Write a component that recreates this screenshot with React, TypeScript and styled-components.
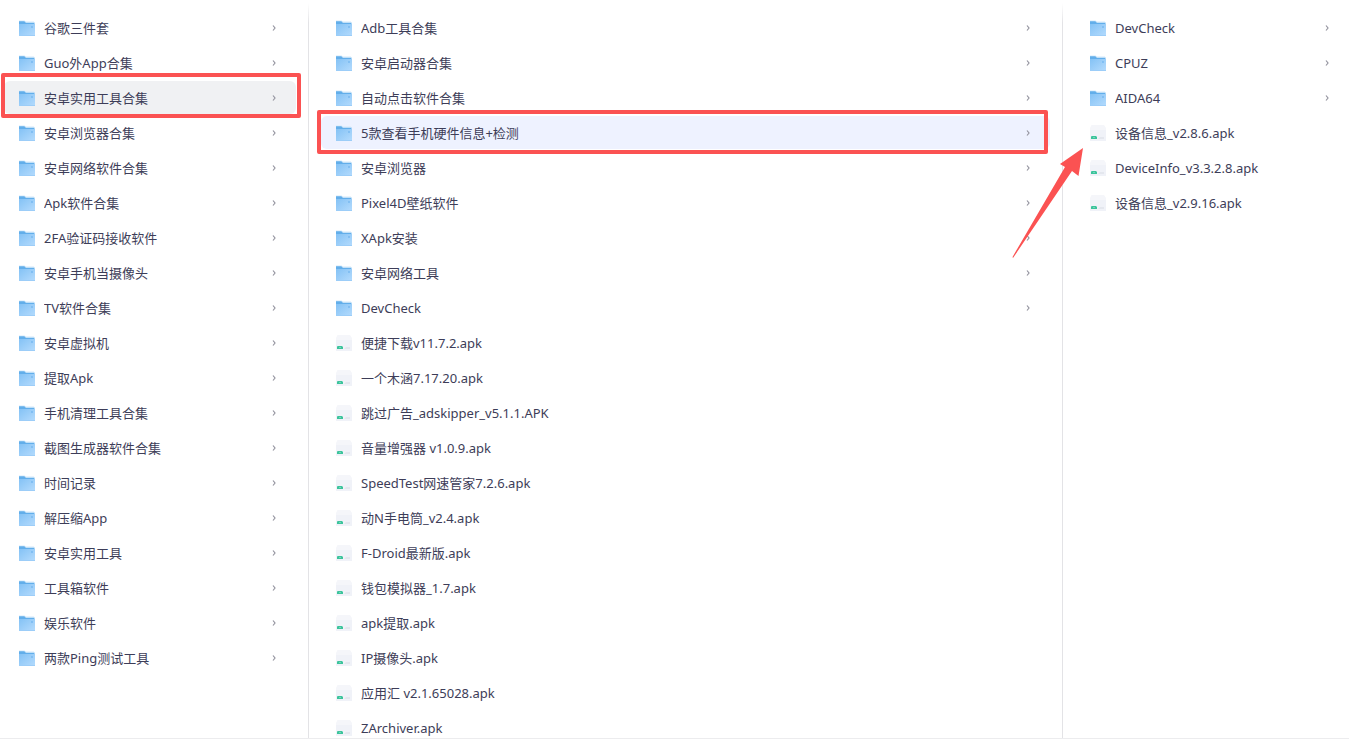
import React from "react";
import styled, { createGlobalStyle, css } from "styled-components";

const GlobalStyle = createGlobalStyle`
  * { box-sizing: border-box; }
  body { margin: 0; background: #fff; }
`;

type Kind = "folder" | "apk";
type Entry = { name: string; kind: Kind };

const folders = (...names: string[]): Entry[] => names.map((name) => ({ name, kind: "folder" }));
const apks = (...names: string[]): Entry[] => names.map((name) => ({ name, kind: "apk" }));

const rootEntries = folders(
  "谷歌三件套",
  "Guo外App合集",
  "安卓实用工具合集",
  "安卓浏览器合集",
  "安卓网络软件合集",
  "Apk软件合集",
  "2FA验证码接收软件",
  "安卓手机当摄像头",
  "TV软件合集",
  "安卓虚拟机",
  "提取Apk",
  "手机清理工具合集",
  "截图生成器软件合集",
  "时间记录",
  "解压缩App",
  "安卓实用工具",
  "工具箱软件",
  "娱乐软件",
  "两款Ping测试工具"
);

const toolEntries = [
  ...folders(
    "Adb工具合集",
    "安卓启动器合集",
    "自动点击软件合集",
    "5款查看手机硬件信息+检测",
    "安卓浏览器",
    "Pixel4D壁纸软件",
    "XApk安装",
    "安卓网络工具",
    "DevCheck"
  ),
  ...apks(
    "便捷下载v11.7.2.apk",
    "一个木涵7.17.20.apk",
    "跳过广告_adskipper_v5.1.1.APK",
    "音量增强器 v1.0.9.apk",
    "SpeedTest网速管家7.2.6.apk",
    "动N手电筒_v2.4.apk",
    "F-Droid最新版.apk",
    "钱包模拟器_1.7.apk",
    "apk提取.apk",
    "IP摄像头.apk",
    "应用汇 v2.1.65028.apk",
    "ZArchiver.apk"
  ),
];

const deviceEntries = [
  ...folders("DevCheck", "CPUZ", "AIDA64"),
  ...apks("设备信息_v2.8.6.apk", "DeviceInfo_v3.3.2.8.apk", "设备信息_v2.9.16.apk"),
];

const Page = styled.div`
  height: 100vh;
  padding-bottom: 1px;
  font-family: "Noto Sans", "Noto Sans CJK SC", sans-serif;
`;

const Browser = styled.main`
  display: grid;
  grid-template-columns: 309px minmax(0, 1fr) 286px;
  height: 100%;
  overflow: hidden;
  border-bottom: 1px solid #ececee;
`;

const Column = styled.section<{ $first?: boolean; $last?: boolean }>`
  position: relative;
  min-width: 0;
  padding: 11px ${(p) => (p.$last ? 0 : 12)}px 0 ${(p) => (p.$first ? 4 : 12)}px;
  ${(p) =>
    !p.$last &&
    css`
      border-right: 1px solid;
      border-image: linear-gradient(to bottom, #fff 4px, #e3e3e6 24px) 1;
    `}
`;

const List = styled.ul`
  display: flex;
  flex-direction: column;
  gap: 2px;
  margin: 0;
  padding: 0;
  list-style: none;
`;

const Item = styled.li`
  position: relative;
`;

const Row = styled.button<{ $tone?: Tone }>`
  display: flex;
  align-items: center;
  gap: 8px;
  width: 100%;
  height: 33px;
  padding: 0 19px 0 14px;
  border: 0;
  border-radius: 6px;
  background: ${(p) => (p.$tone === "grey" ? "#f0f1f3" : p.$tone === "blue" ? "#eef2ff" : "transparent")};
  color: #3d3d58;
  font: inherit;
  font-size: 13px;
  line-height: 20px;
  text-align: left;
  cursor: pointer;
`;

const Name = styled.span`
  flex: 1;
  min-width: 0;
  overflow: hidden;
  white-space: nowrap;
  text-overflow: ellipsis;
`;

const Icon = styled.svg`
  flex: none;
  display: block;
`;

type Tone = "grey" | "blue";

const Highlight = styled.div<{ $tone: Tone }>`
  position: absolute;
  inset: ${(p) => (p.$tone === "grey" ? "-8px -5px -4px -3px" : "-6px 2px -5px -4px")};
  border: 4px solid #fb5252;
  border-radius: 2px;
  pointer-events: none;
`;

const Pointer = styled.svg`
  position: absolute;
  top: 147px;
  left: -51px;
  pointer-events: none;
`;

const FolderIcon = () => (
  <Icon width="18" height="18" viewBox="0 0 18 18" aria-hidden="true">
    <defs>
      <linearGradient id="folderFace" x1="0" y1="0" x2="1" y2="1">
        <stop offset="0" stopColor="#84c2f5" />
        <stop offset="1" stopColor="#b4dbfd" />
      </linearGradient>
    </defs>
    <path d="M1 2H6.500L8 3.500H16.500V16H1Z" fill="#62aeea" />
    <path d="M1 1.500H6.500L8 2.500H16V3.500H7.500L6.500 2.300H1Z" fill="#d3e9fb" />
    <path d="M1 5H17V16.500Q17 17 16.500 17H1.500Q1 17 1 16.500Z" fill="url(#folderFace)" />
    <path d="M1 16H17V16.500Q17 17 16.500 17H1.500Q1 17 1 16.500Z" fill="#9ccdf8" />
    <rect x="13" y="7" width="2" height="2" fill="#6fb4ee" opacity=".6" />
  </Icon>
);

const ApkIcon = () => (
  <Icon width="18" height="18" viewBox="0 0 18 18" aria-hidden="true">
    <path d="M2.500 1H15L17 4V16.500Q17 17 16.500 17H1.500Q1 17 1 16.500V4Z" fill="#f5f6fa" />
    <path d="M1 6H17V16.500Q17 17 16.500 17H1.500Q1 17 1 16.500Z" fill="#f0f2f8" />
    <path d="M2 15V12.500L3 12H7L8 13V15Z" fill="#3cc49c" />
    <path d="M4 13H6V13.800H4Z" fill="#8addc4" />
    <path d="M9 15L11 13H15V15Z" fill="#e4e7ee" />
  </Icon>
);

const Chevron = () => (
  <Icon width="5" height="8" viewBox="0 0 5 8" fill="none" stroke="#94949f" strokeWidth="1.200" aria-hidden="true">
    <path d="M1 1.500L3 4L1 6.500" />
  </Icon>
);

type FileColumnProps = {
  label: string;
  entries: Entry[];
  selected?: number;
  tone?: Tone;
  first?: boolean;
  last?: boolean;
  children?: React.ReactNode;
};

const FileColumn = ({ label, entries, selected, tone, first, last, children }: FileColumnProps) => (
  <Column $first={first} $last={last} aria-label={label}>
    <List>
      {entries.map((entry, i) => (
        <Item key={entry.name}>
          <Row type="button" $tone={i === selected ? tone : undefined} aria-current={i === selected || undefined}>
            {entry.kind === "folder" ? <FolderIcon /> : <ApkIcon />}
            <Name>{entry.name}</Name>
            {entry.kind === "folder" && <Chevron />}
          </Row>
          {i === selected && tone && <Highlight $tone={tone} />}
        </Item>
      ))}
    </List>
    {children}
  </Column>
);

export default function App() {
  return (
    <Page>
      <GlobalStyle />
      <Browser>
        <FileColumn first label="全部文件" entries={rootEntries} selected={2} tone="grey" />
        <FileColumn label="安卓实用工具合集" entries={toolEntries} selected={3} tone="blue" />
        <FileColumn last label="5款查看手机硬件信息+检测" entries={deviceEntries}>
          <Pointer width="72" height="112" viewBox="0 0 72 112" aria-hidden="true">
            <path d="M71 1L66.500 29L60 24L1 111L0.500 110L53 20L48 17Z" fill="#fb5252" />
          </Pointer>
        </FileColumn>
      </Browser>
    </Page>
  );
}
